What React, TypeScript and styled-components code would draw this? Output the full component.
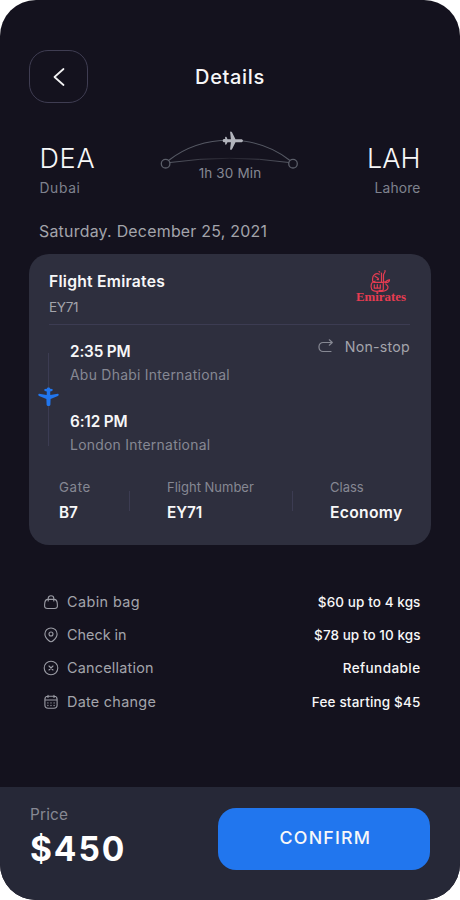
import React from 'react';
import styled, { createGlobalStyle } from 'styled-components';

const GlobalStyle = createGlobalStyle`
  *, *::before, *::after { box-sizing: border-box; }
  body { margin: 0; background: #fff; }
`;

const color = {
  page: '#14121e',
  card: '#2e2f3e',
  footer: '#262837',
  line: '#3c3c52',
  white: '#f7f7f8',
  soft: '#a3a4ab',
  muted: '#868893',
  cool: '#7f828e',
  blue: '#2176ee',
  red: '#e63c51',
};

const Text = styled.span<{ $size: number; $line?: number; $weight?: number; $color?: string; $track?: number }>`
  display: block;
  margin: 0;
  white-space: nowrap;
  font-size: ${(p) => p.$size}px;
  line-height: ${(p) => p.$line ?? 18}px;
  font-weight: ${(p) => p.$weight ?? 400};
  color: ${(p) => p.$color ?? color.white};
  letter-spacing: ${(p) => p.$track ?? 0}px;
`;

const Screen = styled.main`
  display: flex;
  flex-direction: column;
  width: 460px;
  height: 900px;
  overflow: hidden;
  border-radius: 36px;
  background: ${color.page};
  font-family: Inter, 'Liberation Sans', sans-serif;
`;

const Header = styled.header`
  display: grid;
  grid-template-columns: 59px 1fr 59px;
  align-items: center;
  justify-items: center;
  height: 53px;
  margin: 50px 29px 0;
`;

const BackButton = styled.button`
  display: flex;
  align-items: center;
  justify-content: center;
  width: 59px;
  height: 53px;
  padding: 0;
  border: 1px solid #3f3d52;
  border-radius: 19px;
  background: transparent;
`;

const Route = styled.section`
  display: flex;
  justify-content: space-between;
  height: 66px;
  margin: 27px 39.5px 0;
`;

const Endpoint = styled.div<{ $end?: boolean }>`
  display: flex;
  flex-direction: column;
  gap: 4px;
  width: 80px;
  padding-top: 13px;
  align-items: ${(p) => (p.$end ? 'flex-end' : 'flex-start')};
`;

const Path = styled.div`
  display: flex;
  flex-direction: column;
  align-items: center;
  width: 140px;

  svg { display: block; margin-bottom: -5px; }
`;

const DateRow = styled.div`
  margin: 26px 39px 12px;
`;

const Card = styled.section`
  display: flex;
  flex-direction: column;
  flex: none;
  height: 291px;
  width: 402px;
  margin-left: 29px;
  padding: 0 21px 0 20px;
  border-radius: 20px;
  background: ${color.card};
`;

const CardHead = styled.div`
  display: flex;
  justify-content: space-between;
  height: 71px;
  padding-top: 18px;
  border-bottom: 1px solid ${color.line};
`;

const Airline = styled.div`
  display: flex;
  flex-direction: column;
  gap: 6px;
`;

const Logo = styled.svg`
  margin: -3px 3px 0 0;
`;

const Journey = styled.div`
  display: flex;
  height: 132px;
  padding-top: 17px;
`;

const Track = styled.svg`
  margin: 11px 11px 0 -11px;
`;

const Stops = styled.div`
  display: flex;
  flex: 1;
  flex-direction: column;
  gap: 28px;
`;

const Stop = styled.div`
  display: flex;
  flex-direction: column;
  gap: 4px;
`;

const NonStop = styled.div`
  display: flex;
  align-items: flex-start;
  gap: 11px;
  margin-top: -5px;
`;

const Facts = styled.div`
  display: flex;
  align-items: flex-start;
  padding: 21px 0 0 10px;
`;

const Fact = styled.div<{ $width: number }>`
  display: flex;
  flex-direction: column;
  gap: 7px;
  width: ${(p) => p.$width}px;
`;

const Rule = styled.div<{ $after: number }>`
  width: 1px;
  height: 20px;
  margin: 13px ${(p) => p.$after}px 0 0;
  background: ${color.line};
`;

const Services = styled.ul`
  display: flex;
  flex-direction: column;
  gap: 13.2px;
  margin: 47px 39.5px 0 42.5px;
  padding: 0;
  list-style: none;
`;

const Service = styled.li`
  display: flex;
  align-items: center;
  height: 20px;

  svg { flex: none; margin-right: 8.5px; }
  & > :last-child { margin-left: auto; }
`;

const Footer = styled.footer`
  display: flex;
  justify-content: space-between;
  height: 113px;
  margin-top: auto;
  padding: 18px 29.6px 0 30px;
  background: ${color.footer};
`;

const Price = styled.div`
  display: flex;
  flex-direction: column;
  gap: 7px;
`;

const Confirm = styled.button`
  display: flex;
  align-items: center;
  justify-content: center;
  width: 212px;
  height: 62px;
  margin-top: 3px;
  padding: 0 0 3px 2px;
  border: 0;
  border-radius: 18px;
  background: ${color.blue};
  font-family: inherit;
`;

const ServiceIcon = ({ kind }: { kind: string }) => (
  <svg width="16" height="16" viewBox="0 0 16 16" fill="none" stroke="#9b9ca5" strokeWidth="1.1" strokeLinecap="round" strokeLinejoin="round">
    {kind === 'bag' && (
      <>
        <path d="M4.7 5.4h6.6c2.4 0 2.7 1.3 2.9 3.3l.2 2.3c.2 2.2-.5 3.5-3 3.5H4.600c-2.500 0-3.200-1.300-3-3.500l.2-2.300c.2-2 .5-3.300 2.900-3.300Z" />
        <path d="M5.200 7V4.500C5.200 2.800 6.300 1.800 8 1.800s2.800 1 2.800 2.700V7" />
      </>
    )}
    {kind === 'pin' && (
      <>
        <path d="M8 14.700c-1 0-1.700-.5-2.400-1.200C3.300 11.300 1.900 9.200 1.900 6.900a6.100 5.900 0 0 1 12.200 0c0 2.300-1.400 4.400-3.700 6.600-.7.700-1.400 1.200-2.400 1.200Z" />
        <circle cx="8" cy="7" r="2" />
      </>
    )}
    {kind === 'cancel' && (
      <>
        <circle cx="8" cy="8" r="6.8" />
        <path d="m6 6 4 4m0-4-4 4" />
      </>
    )}
    {kind === 'calendar' && (
      <>
        <path d="M5 1.200v2.200m6-2.200v2.200M2 6h12M4.800 2.300h6.400c2 0 2.900 1.100 2.900 3v5.800c0 2.100-1 3.200-3.200 3.200H5.100c-2.200 0-3.200-1.100-3.200-3.200V5.300c0-1.900.9-3 2.900-3Z" />
        <path d="M4.900 8.900h.01M8 8.900h.01M11.100 8.900h.01M4.900 11.500h.01M8 11.500h.01M11.100 11.500h.01" strokeWidth="1.300" />
      </>
    )}
  </svg>
);

const services = [
  { icon: 'bag', label: 'Cabin bag', track: 0.42, value: '$60 up to 4 kgs', valueTrack: 0.1 },
  { icon: 'pin', label: 'Check in', track: 0, value: '$78 up to 10 kgs', valueTrack: 0.06 },
  { icon: 'cancel', label: 'Cancellation', track: 0.23, value: 'Refundable', valueTrack: 0.43 },
  { icon: 'calendar', label: 'Date change', track: 0.28, value: 'Fee starting $45', valueTrack: 0.17 },
];

const FlightPath = () => (
  <svg width="140" height="39" viewBox="160 130 140 39" fill="none">
    <defs>
      <linearGradient id="fade" x1="170" x2="289" y1="0" y2="0" gradientUnits="userSpaceOnUse">
        <stop stopColor="#555863" />
        <stop offset=".5" stopColor="#24222d" />
        <stop offset="1" stopColor="#555863" />
      </linearGradient>
    </defs>
    <path d="M168.500 160.500C203 133.500 256 133.500 290 160.500" stroke="#555863" strokeWidth="1.200" />
    <path d="M170 162.500Q230 154 289 162.500" stroke="url(#fade)" />
    <circle cx="165.600" cy="163.700" r="4.300" stroke="#5b5e69" strokeWidth="1.300" />
    <circle cx="293" cy="163.700" r="4.300" stroke="#5b5e69" strokeWidth="1.300" />
    <path
      fill="#b2b4bc"
      d="M243 140.700c0 .9-.9 1.500-2 1.500h-5.500l-3.500 7c-.5.800-1.800.9-1.900.1l.8-7.100h-3.400l-1 2.100c-.4.600-1.500.5-1.400-.2l.1-1.800h-1.300c-1.500 0-1.500-3.200 0-3.200h1.300l-.1-1.800c-.1-.7 1-.8 1.400-.2l1 2.100h3.400l-.8-7.100c0-.9 1.400-.7 1.900.1l3.500 7h5.500c1.100 0 2 .6 2 1.500Z"
    />
  </svg>
);

const EmiratesLogo = () => (
  <Logo width="52" height="34" viewBox="0 0 52 34" fill="none" stroke={color.red} strokeWidth="1.200" strokeLinecap="round">
    <path d="M30 1.500c.7 2-1.500 2.600-1.500 4.700v6.600M26.500 4v8.800M24.300 5.200c-3.500-1.700-6.700 1-6.700 4.300v2.200c0 1 1.500 1.200 2.500.4M20 7.300l3 2c1 .7.300 1.600-.8 1.200M24 2.300l.8.800" />
    <path d="M17.500 13.200c-2 2-2 7.300.7 8.400 2.400 1 5.200.8 7.200-.4M18.700 13.300h8.800c2.400 0 3.900-.3 4.700-1.800l2.200-.8M34.500 10.800c0 1.800-1.800 2.800-4 3.100" />
    <path d="M19.300 15.800v3.400h6v-3.400M22.300 15.600v3.500M28.300 13.800v6.400c0 1.500-2.300 1.600-3.600 1M31 15.500c2 .8 2.700 3.200 1.200 4.800-1.800 1.900-5.300 2.100-8 2.200" />
    <text x="1" y="31.500" textLength="50" lengthAdjust="spacingAndGlyphs" fill={color.red} stroke="none" fontFamily="'Liberation Serif', serif" fontWeight="700" fontSize="13.400">
      Emirates
    </text>
  </Logo>
);

export default function App() {
  return (
    <>
      <GlobalStyle />
      <Screen>
        <Header>
          <BackButton aria-label="Back">
            <svg width="12" height="18" viewBox="0 0 12 18" fill="none" stroke="#f2f2f3" strokeWidth="1.700" strokeLinecap="round" strokeLinejoin="round">
              <path d="M10.500 1 1.500 9l9 8" />
            </svg>
          </BackButton>
          <Text as="h1" $size={20} $line={24} $weight={500} $track={0.65}>Details</Text>
        </Header>

        <Route>
          <Endpoint>
            <Text $size={27} $line={32} $weight={300} $track={0.7}>DEA</Text>
            <Text $size={13.8} $color={color.cool} $track={0.65}>Dubai</Text>
          </Endpoint>
          <Path>
            <FlightPath />
            <Text $size={13.5} $color={color.muted} $track={0.15}>1h 30 Min</Text>
          </Path>
          <Endpoint $end>
            <Text $size={27} $line={32} $weight={300}>LAH</Text>
            <Text $size={13.8} $color={color.cool} $track={0.15}>Lahore</Text>
          </Endpoint>
        </Route>

        <DateRow>
          <Text $size={15.9} $line={20} $color={color.soft} $track={0.25}>Saturday. December 25, 2021</Text>
        </DateRow>

        <Card>
          <CardHead>
            <Airline>
              <Text as="h2" $size={15.7} $line={20} $weight={600} $track={0.24}>Flight Emirates</Text>
              <Text $size={13.5} $color={color.soft} $track={-0.3}>EY71</Text>
            </Airline>
            <EmiratesLogo />
          </CardHead>

          <Journey>
            <Track width="21" height="93" viewBox="0 0 21 93">
              <path d="M10.500 0v93" stroke={color.line} />
              <path
                fill={color.blue}
                d="M10.500 34.500c1 0 1.500.5 1.600 1.300l2 .2c.8.1.8 1.700 0 1.900l-1.900.5.1 3.500 7.500-1.100c1.200-.1 1.200 1.800.1 2.200L12.600 46l-.2 5.800c-.1 1.600-3.700 1.600-3.800 0L8.400 46l-7.300-3c-1.100-.4-1.100-2.300.1-2.200l7.500 1.100.1-3.500-1.900-.5c-.8-.2-.8-1.800 0-1.900l2-.2c.1-.8.6-1.300 1.600-1.300Z"
              />
            </Track>
            <Stops>
              <Stop>
                <Text $size={15.3} $line={20} $weight={600} $track={-0.15}>2:35 PM</Text>
                <Text $size={13.9} $color={color.muted} $track={0.28}>Abu Dhabi International</Text>
              </Stop>
              <Stop>
                <Text $size={15.3} $line={20} $weight={600} $track={-0.15}>6:12 PM</Text>
                <Text $size={13.9} $color={color.muted} $track={0.28}>London International</Text>
              </Stop>
            </Stops>
            <NonStop>
              <svg width="16" height="18" viewBox="0 0 16 18" fill="none" stroke="#868893" strokeWidth="1.200" strokeLinecap="round" strokeLinejoin="round">
                <path d="M13 14.500H5a4 4 0 0 1-4-4v-1a4 4 0 0 1 4-4h9.300M11.300 2.800l3 2.700-3 2.700" />
              </svg>
              <Text $size={14.2} $line={20} $color={color.soft} $track={0.25}>Non-stop</Text>
            </NonStop>
          </Journey>

          <Facts>
            <Fact $width={70}>
              <Text $size={13.3} $color={color.muted} $track={0.65}>Gate</Text>
              <Text $size={15.3} $line={20} $weight={600} $track={-0.1}>B7</Text>
            </Fact>
            <Rule $after={37} />
            <Fact $width={125}>
              <Text $size={13} $color={color.muted}>Flight Number</Text>
              <Text $size={15.3} $line={20} $weight={600} $track={-0.1}>EY71</Text>
            </Fact>
            <Rule $after={37} />
            <Fact $width={72}>
              <Text $size={13} $color={color.muted}>Class</Text>
              <Text $size={15.7} $line={20} $weight={600} $track={0.3}>Economy</Text>
            </Fact>
          </Facts>
        </Card>

        <Services>
          {services.map((s) => (
            <Service key={s.label}>
              <ServiceIcon kind={s.icon} />
              <Text $size={14.4} $line={20} $color={color.soft} $track={s.track}>{s.label}</Text>
              <Text $size={13.5} $line={20} $weight={500} $track={s.valueTrack}>{s.value}</Text>
            </Service>
          ))}
        </Services>

        <Footer>
          <Price>
            <Text $size={15.3} $line={19} $color={color.muted} $track={0.2}>Price</Text>
            <Text $size={33.5} $line={37} $weight={700} $color="#fff" $track={1.9}>$450</Text>
          </Price>
          <Confirm>
            <Text $size={17.8} $line={24} $weight={500} $track={1.2}>CONFIRM</Text>
          </Confirm>
        </Footer>
      </Screen>
    </>
  );
}
